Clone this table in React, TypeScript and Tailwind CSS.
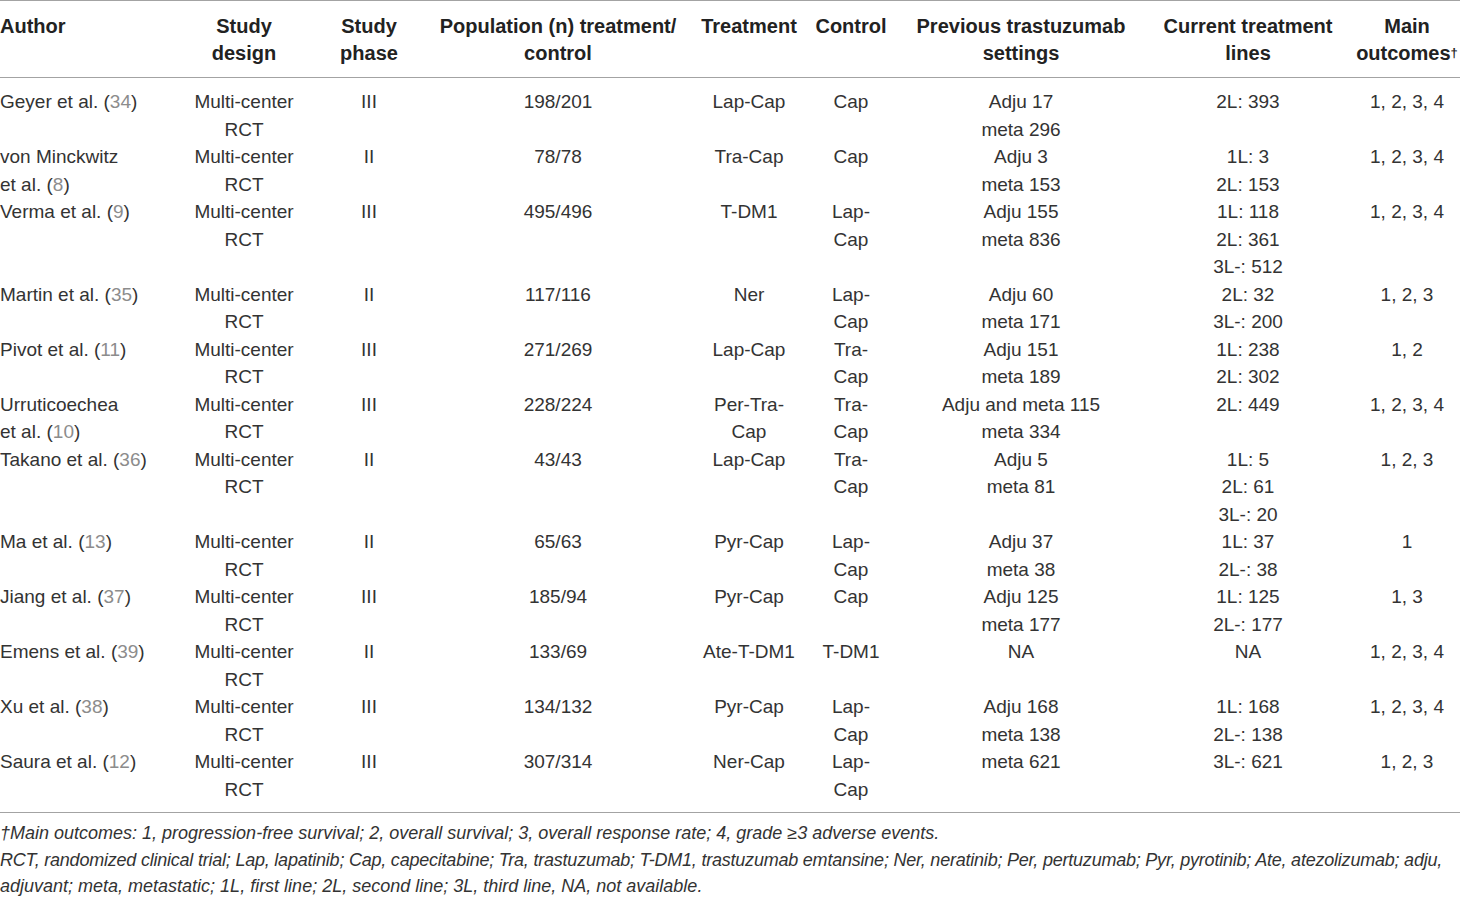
import React from 'react'

type Row = {
  author: [string, string, string] | [string, string, string, string]
  phase: string
  pop: string
  treatment: string[]
  control: string[]
  previous: string[]
  current: string[]
  outcomes: string
}

// author: [first line, text before ref, ref number, after] ; 4-item form has an extra first line
const rows: Row[] = [
  { author: ['Geyer et al. (', '34', ')'], phase: 'III', pop: '198/201', treatment: ['Lap-Cap'], control: ['Cap'], previous: ['Adju 17', 'meta 296'], current: ['2L: 393'], outcomes: '1, 2, 3, 4' },
  { author: ['von Minckwitz', 'et al. (', '8', ')'], phase: 'II', pop: '78/78', treatment: ['Tra-Cap'], control: ['Cap'], previous: ['Adju 3', 'meta 153'], current: ['1L: 3', '2L: 153'], outcomes: '1, 2, 3, 4' },
  { author: ['Verma et al. (', '9', ')'], phase: 'III', pop: '495/496', treatment: ['T-DM1'], control: ['Lap-', 'Cap'], previous: ['Adju 155', 'meta 836'], current: ['1L: 118', '2L: 361', '3L-: 512'], outcomes: '1, 2, 3, 4' },
  { author: ['Martin et al. (', '35', ')'], phase: 'II', pop: '117/116', treatment: ['Ner'], control: ['Lap-', 'Cap'], previous: ['Adju 60', 'meta 171'], current: ['2L: 32', '3L-: 200'], outcomes: '1, 2, 3' },
  { author: ['Pivot et al. (', '11', ')'], phase: 'III', pop: '271/269', treatment: ['Lap-Cap'], control: ['Tra-', 'Cap'], previous: ['Adju 151', 'meta 189'], current: ['1L: 238', '2L: 302'], outcomes: '1, 2' },
  { author: ['Urruticoechea', 'et al. (', '10', ')'], phase: 'III', pop: '228/224', treatment: ['Per-Tra-', 'Cap'], control: ['Tra-', 'Cap'], previous: ['Adju and meta 115', 'meta 334'], current: ['2L: 449'], outcomes: '1, 2, 3, 4' },
  { author: ['Takano et al. (', '36', ')'], phase: 'II', pop: '43/43', treatment: ['Lap-Cap'], control: ['Tra-', 'Cap'], previous: ['Adju 5', 'meta 81'], current: ['1L: 5', '2L: 61', '3L-: 20'], outcomes: '1, 2, 3' },
  { author: ['Ma et al. (', '13', ')'], phase: 'II', pop: '65/63', treatment: ['Pyr-Cap'], control: ['Lap-', 'Cap'], previous: ['Adju 37', 'meta 38'], current: ['1L: 37', '2L-: 38'], outcomes: '1' },
  { author: ['Jiang et al. (', '37', ')'], phase: 'III', pop: '185/94', treatment: ['Pyr-Cap'], control: ['Cap'], previous: ['Adju 125', 'meta 177'], current: ['1L: 125', '2L-: 177'], outcomes: '1, 3' },
  { author: ['Emens et al. (', '39', ')'], phase: 'II', pop: '133/69', treatment: ['Ate-T-DM1'], control: ['T-DM1'], previous: ['NA'], current: ['NA'], outcomes: '1, 2, 3, 4' },
  { author: ['Xu et al. (', '38', ')'], phase: 'III', pop: '134/132', treatment: ['Pyr-Cap'], control: ['Lap-', 'Cap'], previous: ['Adju 168', 'meta 138'], current: ['1L: 168', '2L-: 138'], outcomes: '1, 2, 3, 4' },
  { author: ['Saura et al. (', '12', ')'], phase: 'III', pop: '307/314', treatment: ['Ner-Cap'], control: ['Lap-', 'Cap'], previous: ['meta 621'], current: ['3L-: 621'], outcomes: '1, 2, 3' },
]

const cols = 'grid grid-cols-[194px_100px_150px_228px_154px_50px_290px_164px_130px]'

function Center({ lines, className = '' }: { lines: string[]; className?: string }) {
  return (
    <div className={`flex flex-col items-center whitespace-nowrap ${className}`}>
      {lines.map((l, i) => (
        <span key={i}>{l}</span>
      ))}
    </div>
  )
}

function Author({ a }: { a: Row['author'] }) {
  const four = a.length === 4
  const [pre, num, post] = four ? [a[1], a[2], a[3]] : [a[0], a[1], a[2]]
  return (
    <div className="flex flex-col whitespace-nowrap">
      {four && <span>{a[0]}</span>}
      <span>
        {pre}
        <span className="text-[#8c8c8c]">{num}</span>
        {post}
      </span>
    </div>
  )
}

export default function App() {
  return (
    <div className="w-[1460px] h-[897px] overflow-hidden bg-white text-[#333] font-['Liberation_Sans',Arial,sans-serif]">
      {/* Header */}
      <div className={`${cols} border-t border-b border-[#a3a3a3] pt-[12px] pb-[10px] text-[20px] leading-[27px] font-bold text-[#222]`}>
        <div className="whitespace-nowrap">Author</div>
        <Center lines={['Study', 'design']} />
        <Center lines={['Study', 'phase']} />
        <Center lines={['Population (n) treatment/', 'control']} />
        <Center lines={['Treatment']} />
        <Center lines={['Control']} />
        <Center lines={['Previous trastuzumab', 'settings']} />
        <Center lines={['Current treatment', 'lines']} />
        <div className="flex flex-col items-center whitespace-nowrap pl-[24px]">
          <span>Main</span>
          <span>
            outcomes<sup className="text-[13px] relative -top-[3px]">†</sup>
          </span>
        </div>
      </div>

      {/* Body */}
      <div className={`${cols} border-b border-[#a3a3a3] pt-[10px] pb-[9px] text-[19px] leading-[27.5px]`}>
        {rows.map((r, i) => (
          <React.Fragment key={i}>
            <Author a={r.author} />
            <Center lines={['Multi-center', 'RCT']} />
            <Center lines={[r.phase]} />
            <Center lines={[r.pop]} />
            <Center lines={r.treatment} />
            <Center lines={r.control} />
            <Center lines={r.previous} />
            <Center lines={r.current} />
            <Center lines={[r.outcomes]} className="pl-[24px]" />
          </React.Fragment>
        ))}
      </div>

      {/* Footnotes */}
      <div className="pt-[7px] text-[18px] leading-[26.5px] italic text-[#333] whitespace-nowrap">
        <p>†Main outcomes: 1, progression-free survival; 2, overall survival; 3, overall response rate; 4, grade ≥3 adverse events.</p>
        <p className="tracking-[-0.22px]">RCT, randomized clinical trial; Lap, lapatinib; Cap, capecitabine; Tra, trastuzumab; T-DM1, trastuzumab emtansine; Ner, neratinib; Per, pertuzumab; Pyr, pyrotinib; Ate, atezolizumab; adju,</p>
        <p>adjuvant; meta, metastatic; 1L, first line; 2L, second line; 3L, third line, NA, not available.</p>
      </div>
    </div>
  )
}
